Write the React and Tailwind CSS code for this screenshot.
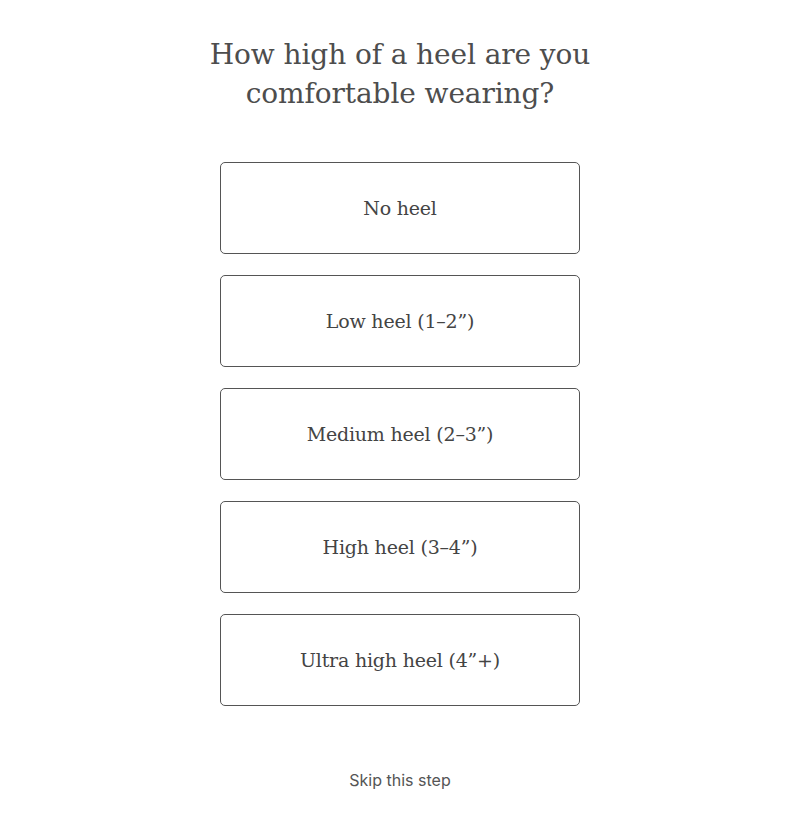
export default function App() {
  const options = [
    'No heel',
    'Low heel (1–2”)',
    'Medium heel (2–3”)',
    'High heel (3–4”)',
    'Ultra high heel (4”+)',
  ];

  return (
    <div className="min-h-[818px] bg-white flex flex-col items-center pt-[35px]">
      {/* Question */}
      <h1 className="text-center text-[28px] leading-[39px] text-[#4d4d4d] font-['DejaVu_Serif',serif] font-normal tracking-[-0.1px]">
        How high of a heel are you
        <br />
        comfortable wearing?
      </h1>

      {/* Options */}
      <div className="mt-[49px] flex flex-col gap-[21px] w-[360px]">
        {options.map((label) => (
          <button
            key={label}
            className="h-[92px] w-full rounded-[5px] border border-[#555] bg-white flex items-center justify-center text-[19px] text-[#444] font-['DejaVu_Serif',serif] tracking-[-0.2px]"
          >
            {label}
          </button>
        ))}
      </div>

      <button className="mt-[62px] text-[16px] text-[#555] font-['Inter',sans-serif]">
        Skip this step
      </button>
    </div>
  );
}
